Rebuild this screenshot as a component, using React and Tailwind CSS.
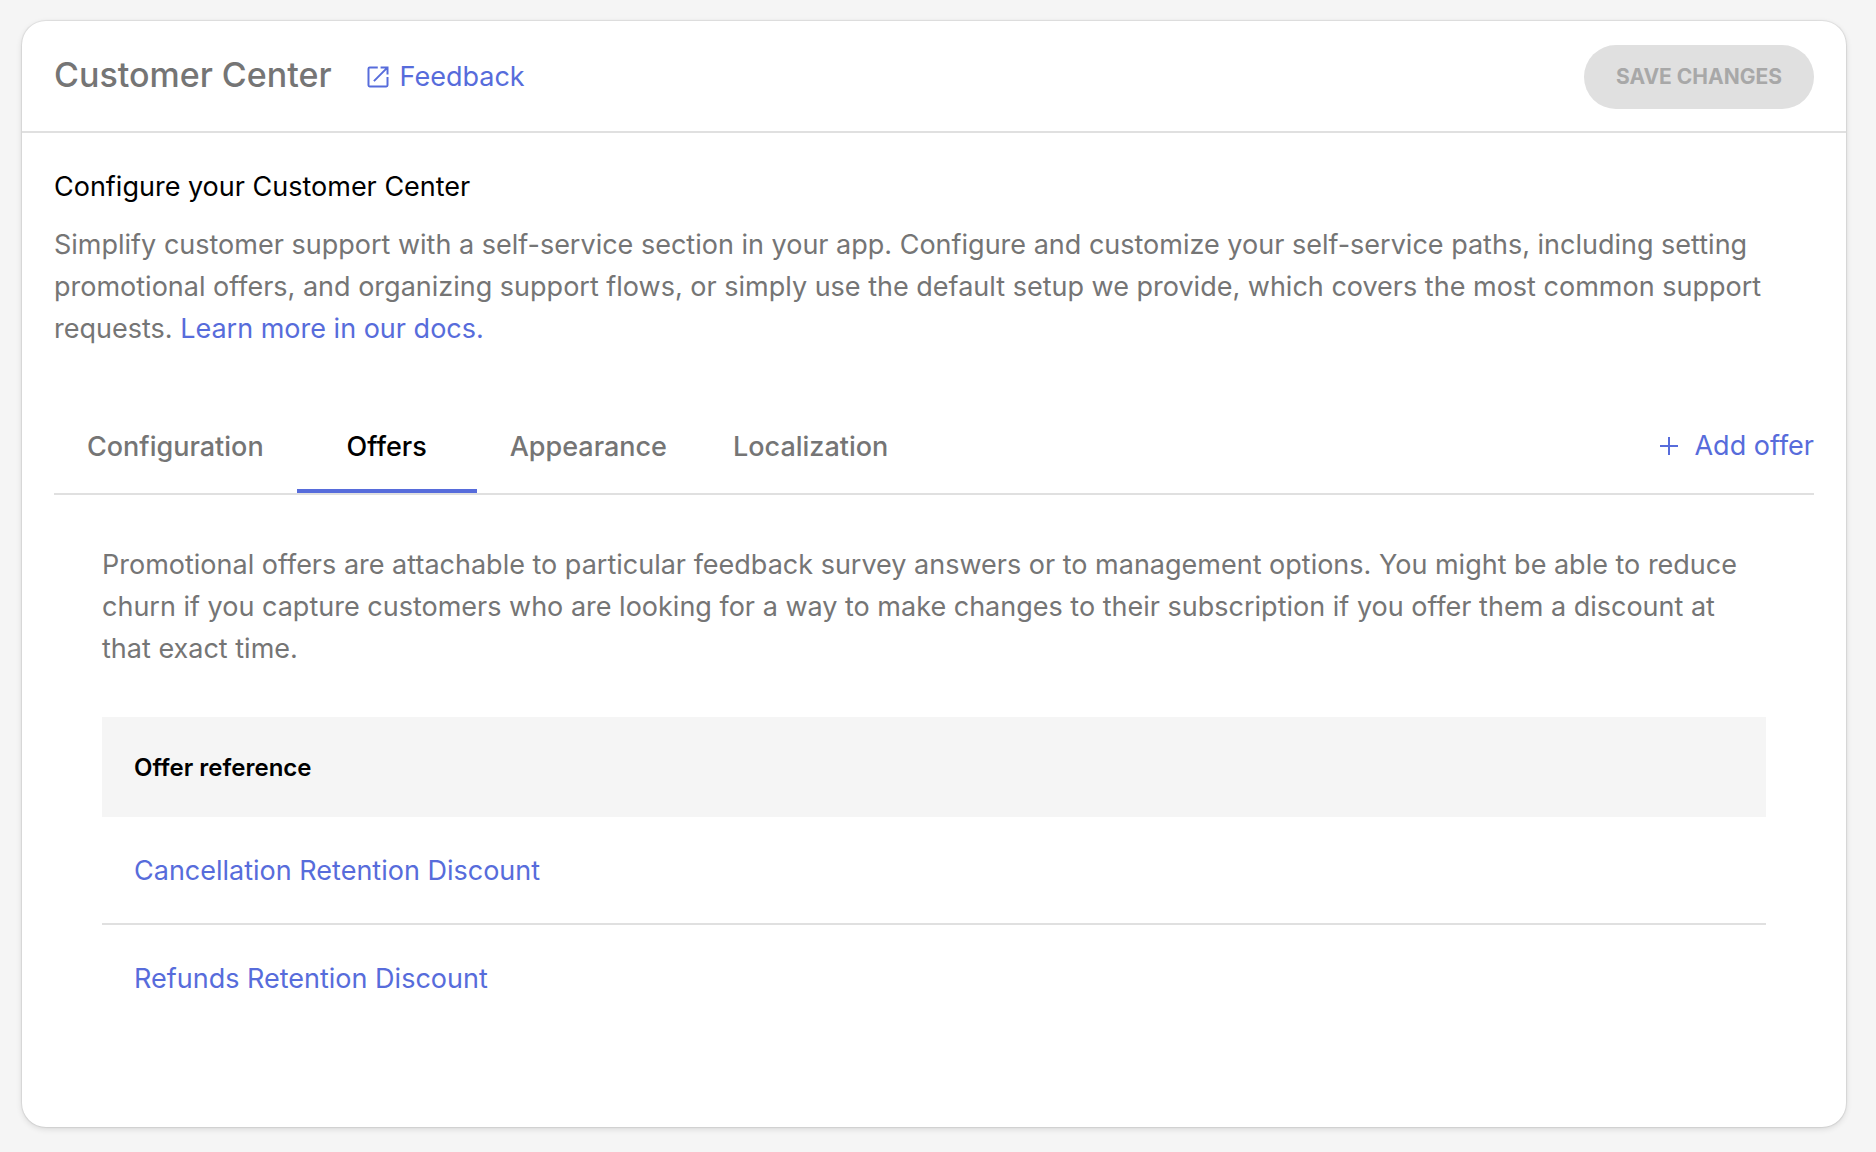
import { useState } from "react";

const tabs = ["Configuration", "Offers", "Appearance", "Localization"];
const offers = ["Cancellation Retention Discount", "Refunds Retention Discount"];

function OpenInNewIcon() {
  return (
    <svg viewBox="0 0 24 24" className="size-7" fill="none" stroke="currentColor" strokeWidth="1.7" aria-hidden="true">
      <path d="M11.800 3.850H4.850a1 1 0 0 0-1 1v14.300a1 1 0 0 0 1 1h14.300a1 1 0 0 0 1-1V12" />
      <path d="M14.200 3.850h5.950v5.950M20 4L8.500 15.500" />
    </svg>
  );
}

function PlusIcon() {
  return (
    <svg viewBox="0 0 18 18" className="size-[18px]" fill="none" stroke="currentColor" strokeWidth="2" aria-hidden="true">
      <path d="M9 0v18M0 9h18" />
    </svg>
  );
}

function Tab({ label, active, onSelect }) {
  return (
    <button
      type="button"
      role="tab"
      aria-selected={active}
      onClick={onSelect}
      className={
        "min-w-[180px] border-b-4 px-[33px] pt-1.5 pb-0 font-medium " +
        (active ? "border-[#576cdb] text-black" : "border-transparent text-[#757575]")
      }
    >
      {label}
    </button>
  );
}

export default function App() {
  const [activeTab, setActiveTab] = useState("Offers");
  return (
    <div className="flex min-h-screen flex-col bg-[#f5f5f5] pt-[21px] pr-[30px] pb-[25px] pl-[22px] font-['Inter',sans-serif] text-[27px] leading-[42px] text-[#757575]">
      <main className="flex-1 rounded-3xl bg-white shadow-[0_0_1px_1px_rgba(0,0,0,0.08),0_2px_6px_rgba(0,0,0,0.12)]">
        <header className="flex items-center justify-between border-b-2 border-[#e0e0e0] px-8 pt-6 pb-[22px]">
          <div className="flex items-center gap-8">
            <h1 className="pb-1 text-[34px] font-medium">Customer Center</h1>
            <a href="#feedback" className="flex items-center gap-2 text-[#576cdb]">
              <OpenInNewIcon />
              Feedback
            </a>
          </div>
          <button type="button" disabled className="h-16 rounded-full bg-[#e0e0e0] px-8 text-[21px] font-bold text-[#a8a8a8]">
            SAVE CHANGES
          </button>
        </header>

        <section className="px-8 pt-[33px]">
          <h2 className="text-black">Configure your Customer Center</h2>
          <p className="mt-4">
            Simplify customer support with a self-service section in your app. Configure and customize your self-service
            paths, including setting promotional offers, and organizing support flows, or simply use the default setup we
            provide, which covers the most common support requests.{" "}
            <a href="#docs" className="text-[#576cdb]">
              Learn more in our docs.
            </a>
          </p>

          <div className="mt-[49px] flex h-24 items-stretch justify-between border-b-2 border-[#e0e0e0]">
            <div role="tablist" className="flex">
              {tabs.map((label) => (
                <Tab key={label} label={label} active={label === activeTab} onSelect={() => setActiveTab(label)} />
              ))}
            </div>
            <button type="button" className="flex items-center gap-4 text-[#576cdb]">
              <PlusIcon />
              Add offer
            </button>
          </div>

          <div className="px-12 pt-[49px] pb-20">
            <p className="pr-3">
              Promotional offers are attachable to particular feedback survey answers or to management options. You might
              be able to reduce churn if you capture customers who are looking for a way to make changes to their
              subscription if you offer them a discount at that exact time.
            </p>
            <table className="mt-[47px] w-full border-separate border-spacing-0 text-left">
              <thead>
                <tr className="h-[100px] bg-[#f5f5f5]">
                  <th scope="col" className="px-8 pt-0.5 text-2xl font-semibold text-black">
                    Offer reference
                  </th>
                </tr>
              </thead>
              <tbody>
                {offers.map((offer) => (
                  <tr key={offer} className="group h-[108px]">
                    <td className="border-b-2 border-[#e0e0e0] px-8 pt-0.5 group-last:border-transparent">
                      <a href="#offer" className="text-[#576cdb]">
                        {offer}
                      </a>
                    </td>
                  </tr>
                ))}
              </tbody>
            </table>
          </div>
        </section>
      </main>
    </div>
  );
}
